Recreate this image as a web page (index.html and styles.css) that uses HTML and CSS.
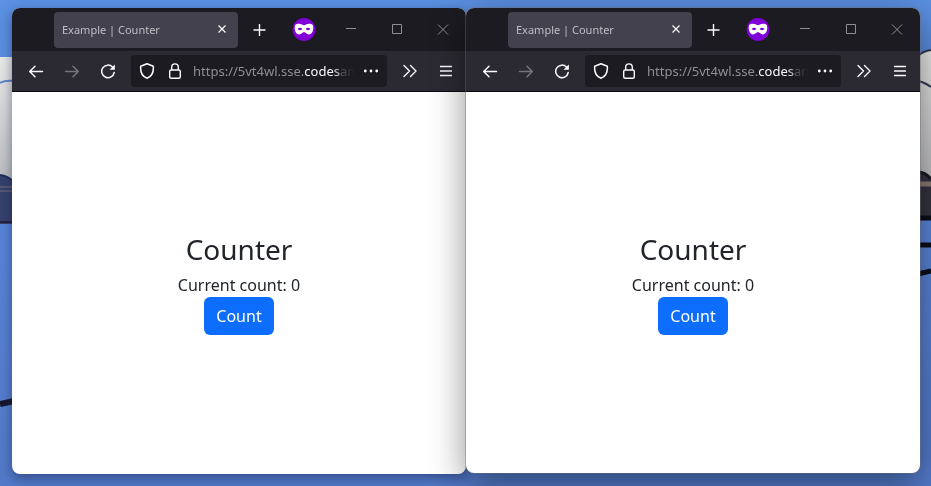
FILE: index.html
```html
<!DOCTYPE html>
<html lang="en">
<head>
<meta charset="utf-8">
<title>Example | Counter</title>
<link rel="stylesheet" href="styles.css">
</head>
<body>
<svg class="wallpaper" viewBox="0 0 931 486" preserveAspectRatio="none" aria-hidden="true">
  <defs>
    <linearGradient id="sky" x1="0" y1="0" x2="0" y2="1"><stop offset="0" stop-color="#5b90e2"/><stop offset=".5" stop-color="#5884d6"/><stop offset="1" stop-color="#5279c8"/></linearGradient>
    <linearGradient id="cloud" x1="0" y1="0" x2="0" y2="1"><stop offset="0" stop-color="#e9eae9"/><stop offset="1" stop-color="#b9bbbe"/></linearGradient>
  </defs>
  <rect width="931" height="486" fill="url(#sky)"/>
  <rect y="57" width="14" height="126" fill="url(#cloud)"/>
  <path d="M0 83Q5 80 14 81" fill="none" stroke="#5c86c8" stroke-width="2"/>
  <path d="M0 175Q8 176 14 183V224H0Z" fill="#35406b"/>
  <path d="M0 175Q8 176 14 182" fill="none" stroke="#202c58" stroke-width="2"/>
  <path d="M0 187H14M0 191H14" stroke="#766f7d" stroke-width="1"/>
  <path d="M0 222H14" stroke="#25223f" stroke-width="2"/>
  <path d="M0 404L14 401" stroke="#15172b" stroke-width="6"/>
  <path d="M918 56Q923 51 931 50V180H918Z" fill="url(#cloud)"/>
  <path d="M918 56Q923 51 931 50M918 81Q924 82 931 87" fill="none" stroke="#313a57" stroke-width="2"/>
  <path d="M918 172Q925 172 931 179V220H918Z" fill="#33333f"/>
  <path d="M918 172Q925 172 931 179" fill="none" stroke="#171923" stroke-width="3"/>
  <path d="M918 184H931" stroke="#8a7b72" stroke-width="5"/>
  <path d="M918 218H931M918 245H931M918 274L931 271" stroke="#0c0e18" stroke-width="5"/>
</svg>
<svg class="sprite" aria-hidden="true">
  <symbol id="close" viewBox="0 0 16 16"><path d="M4.500 3.500l7 7M11.500 3.500l-7 7" stroke-width="1.200"/></symbol>
  <symbol id="plus" viewBox="0 0 16 16"><path d="M7.500 2v12M1.500 8h12" stroke-width="1.400"/></symbol>
  <symbol id="mask" viewBox="0 0 24 24"><circle cx="12" cy="11.500" r="11.400" fill="#8000d7" stroke="none"/><path fill="#fff" fill-rule="evenodd" stroke="none" d="M3 7.500C3.500 5.500 8 5 10 6.500Q12 8 14 6.500C16 5 20.500 5.500 21 7.500C22 12 20 16.500 17 16.500C14.500 16.500 13.500 14 12 14S9.500 16.500 7 16.500C4 16.500 2 12 3 7.500ZM5.500 11Q8 13.300 10.500 11Q8 8.700 5.500 11ZM13.500 11Q16 13.300 18.500 11Q16 8.700 13.500 11Z"/></symbol>
  <symbol id="minimize" viewBox="0 0 16 16"><path d="M3 6.500h10" stroke-width="1"/></symbol>
  <symbol id="maximize" viewBox="0 0 16 16"><path d="M3.500 2.500h9v9h-9z" stroke-width="1"/></symbol>
  <symbol id="quit" viewBox="0 0 16 16"><path d="M3 2.500l10 10M13 2.500l-10 10" stroke-width="1"/></symbol>
  <symbol id="back" viewBox="0 0 16 16"><path d="M14.500 8.500H2M7 3.200L1.700 8.500L7 13.800" stroke-width="1.500" stroke-linecap="round" stroke-linejoin="round"/></symbol>
  <symbol id="reload" viewBox="0 0 16 16"><path d="M12.500 4A6.300 6.300 0 1 0 14.200 9.500" stroke-width="1.500" stroke-linecap="round"/><path d="M14.900 1.500v5.200H9.500z" fill="currentColor" stroke="none"/></symbol>
  <symbol id="shield" viewBox="0 0 16 16"><path d="M8 .8L14.300 3.300C14.800 9 12.500 13.500 8 15.200C3.500 13.500 1.200 9 1.700 3.300Z" stroke-width="1.500" stroke-linejoin="round"/></symbol>
  <symbol id="lock" viewBox="0 0 16 16"><rect x="2.700" y="7" width="10.600" height="8.200" rx="1.500" stroke-width="1.400"/><path d="M4.700 7V4.200a3.300 3.300 0 0 1 6.600 0V7" stroke-width="1.400"/></symbol>
  <symbol id="dots" viewBox="0 0 16 16"><path d="M2.300 8h.01M8 8h.01M13.700 8h.01" stroke-width="2.800" stroke-linecap="round"/></symbol>
  <symbol id="chevrons" viewBox="0 0 16 16"><path d="M2 2.500L7.500 8L2 13.500M8.500 2.500L14 8L8.500 13.500" stroke-width="1.400" stroke-linecap="round" stroke-linejoin="round"/></symbol>
  <symbol id="menu" viewBox="0 0 16 16"><path d="M2 3.500h12M2 8h12M2 12.500h12" stroke-width="1.400"/></symbol>
</svg>
<main class="desktop">
  <section class="window" aria-label="First browser">
    <header class="tab-strip">
      <div class="tab"><span class="tab-title">Example | Counter</span><button class="tab-close" aria-label="Close tab"><svg><use href="#close"/></svg></button></div>
      <button class="new-tab" aria-label="New tab"><svg><use href="#plus"/></svg></button>
      <svg class="private"><use href="#mask"/></svg>
      <button class="caption" aria-label="Minimize"><svg><use href="#minimize"/></svg></button>
      <button class="caption" aria-label="Maximize"><svg><use href="#maximize"/></svg></button>
      <button class="caption" aria-label="Close"><svg><use href="#quit"/></svg></button>
    </header>
    <nav class="toolbar">
      <button class="tool" aria-label="Back"><svg><use href="#back"/></svg></button>
      <button class="tool forward" aria-label="Forward" disabled><svg><use href="#back"/></svg></button>
      <button class="tool" aria-label="Reload"><svg><use href="#reload"/></svg></button>
      <div class="address">
        <button class="site-icon shield" aria-label="Tracking protection"><svg><use href="#shield"/></svg></button>
        <button class="site-icon lock" aria-label="Connection"><svg><use href="#lock"/></svg></button>
        <div class="url">https://5vt4wl.sse.<span class="domain">codes</span>an</div>
        <button class="site-icon dots" aria-label="Page actions"><svg><use href="#dots"/></svg></button>
      </div>
      <button class="tool" aria-label="More tools"><svg><use href="#chevrons"/></svg></button>
      <button class="tool" aria-label="Menu"><svg><use href="#menu"/></svg></button>
    </nav>
    <div class="page"><h1>Counter</h1><p>Current count: 0</p><button class="count">Count</button></div>
  </section>
  <section class="window front" aria-label="Second browser">
    <header class="tab-strip">
      <div class="tab"><span class="tab-title">Example | Counter</span><button class="tab-close" aria-label="Close tab"><svg><use href="#close"/></svg></button></div>
      <button class="new-tab" aria-label="New tab"><svg><use href="#plus"/></svg></button>
      <svg class="private"><use href="#mask"/></svg>
      <button class="caption" aria-label="Minimize"><svg><use href="#minimize"/></svg></button>
      <button class="caption" aria-label="Maximize"><svg><use href="#maximize"/></svg></button>
      <button class="caption" aria-label="Close"><svg><use href="#quit"/></svg></button>
    </header>
    <nav class="toolbar">
      <button class="tool" aria-label="Back"><svg><use href="#back"/></svg></button>
      <button class="tool forward" aria-label="Forward" disabled><svg><use href="#back"/></svg></button>
      <button class="tool" aria-label="Reload"><svg><use href="#reload"/></svg></button>
      <div class="address">
        <button class="site-icon shield" aria-label="Tracking protection"><svg><use href="#shield"/></svg></button>
        <button class="site-icon lock" aria-label="Connection"><svg><use href="#lock"/></svg></button>
        <div class="url">https://5vt4wl.sse.<span class="domain">codes</span>an</div>
        <button class="site-icon dots" aria-label="Page actions"><svg><use href="#dots"/></svg></button>
      </div>
      <button class="tool" aria-label="More tools"><svg><use href="#chevrons"/></svg></button>
      <button class="tool" aria-label="Menu"><svg><use href="#menu"/></svg></button>
    </nav>
    <div class="page"><h1>Counter</h1><p>Current count: 0</p><button class="count">Count</button></div>
  </section>
</main>
</body>
</html>
```
FILE: styles.css
```css
* { box-sizing: border-box; }
body { margin: 0; font-family: "Noto Sans", sans-serif; background: #557fce; }
button { margin: 0; padding: 0; border: 0; background: none; color: inherit; font: inherit; }
svg { width: 16px; height: 16px; flex: none; fill: none; stroke: currentColor; }
.wallpaper { position: fixed; inset: 0; width: 100%; height: 100%; stroke: none; }
.sprite { position: absolute; width: 0; height: 0; }
.desktop { position: relative; display: flex; min-height: 100vh; padding: 8px 11px 12px 12px; }
.window { flex: 1; min-width: 0; display: flex; flex-direction: column; overflow: hidden; border-radius: 8px; background: #fff; box-shadow: 0 4px 12px rgba(20, 30, 70, .5); }
.front { position: relative; margin-bottom: 1px; box-shadow: 0 0 0 1px rgba(110, 110, 115, .4), 0 10px 36px rgba(0, 0, 0, .45); }
.tab-strip { display: flex; align-items: center; height: 43px; padding-left: 42px; background: #1c1b22; color: #fbfbfe; }
.tab { flex: 1; min-width: 0; display: flex; align-items: center; height: 36px; padding: 0 8px; border-radius: 4px; background: #42414d; }
.tab-title { flex: 1; overflow: hidden; white-space: nowrap; font-size: 11px; color: #bfbec6; }
.tab-close { display: flex; }
.new-tab { display: flex; justify-content: center; width: 32px; margin-left: 6px; }
.private { width: 24px; height: 24px; margin: 0 12px 0 16px; }
.caption { display: flex; justify-content: center; width: 46px; color: #8f8e94; }
.toolbar { display: flex; align-items: center; height: 41px; padding: 0 2px 0 6px; border-bottom: 1px solid #0c0c0d; background: #2b2a33; color: #fbfbfe; }
.tool { display: flex; justify-content: center; width: 36px; }
.forward svg { transform: scaleX(-1); }
.forward { color: #76757d; }
.address { flex: 1; min-width: 0; display: flex; align-items: center; height: 32px; margin: 0 5px; border-radius: 4px; background: #1c1b22; }
.site-icon { display: flex; justify-content: center; width: 32px; }
.lock { width: 24px; }
.url { flex: 1; min-width: 0; margin-left: 6px; overflow: hidden; white-space: nowrap; font-size: 13px; line-height: 20px; color: #8f8e96; mask-image: linear-gradient(to left, transparent, #000 24px); }
.domain { color: #fbfbfe; }
.page { flex: 1; display: flex; flex-direction: column; align-items: center; justify-content: center; color: #212529; }
h1 { margin: 0 0 6px; font-size: 28px; line-height: 36px; font-weight: 400; }
p { margin: 0; font-size: 16px; line-height: 24px; }
.count { height: 38px; padding: 0 12px; border-radius: 6px; background: #0d6efd; color: #fff; font-size: 16px; line-height: 24px; }
```
